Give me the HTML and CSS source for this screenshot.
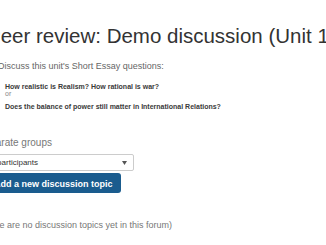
FILE: index.html
```html
<!DOCTYPE html>
<html lang="en">
<head>
<meta charset="utf-8">
<title>Peer review: Demo discussion</title>
<link rel="stylesheet" href="styles.css">
</head>
<body>
<div class="page">
  <h2 class="title">Peer review: Demo discussion (Unit 1)</h2>
  <div class="intro">
    <p class="lead">Discuss this unit's Short Essay questions:</p>
    <p class="question">How realistic is Realism? How rational is war?</p>
    <p class="or">or</p>
    <p class="question q2">Does the balance of power still matter in International Relations?</p>
  </div>
  <div class="groups">
    <label class="groups-label">Separate groups</label>
    <div class="select">
      <span>All participants</span>
      <svg class="arrow" width="5" height="4" viewBox="0 0 5 4"><path d="M0 0H5L2.5 4Z" fill="#555"/></svg>
    </div>
  </div>
  <button class="btn">Add a new discussion topic</button>
  <p class="empty">(There are no discussion topics yet in this forum)</p>
</div>
</body>
</html>
```
FILE: styles.css
```css
html, body {
  margin: 0;
  padding: 0;
  overflow: hidden;
  background: #fff;
}
body {
  font-family: "Liberation Sans", Arial, sans-serif;
  width: 326px;
  height: 245px;
}
.page {
  margin-left: -22px;
  display: flex;
  flex-direction: column;
  align-items: flex-start;
}
.title {
  margin: 24px 0 0 9px;
  font-size: 20.5px;
  line-height: 24px;
  font-weight: normal;
  color: #333;
  white-space: nowrap;
}
.intro {
  padding-left: 20px;
}
.intro p {
  margin: 0;
}
.lead {
  margin-top: 12px !important;
  font-size: 9px;
  line-height: 12px;
  color: #666;
}
.question {
  padding-left: 7px;
  font-size: 7px;
  line-height: 8px;
  font-weight: bold;
  color: #3a3a3a;
  margin-top: 11px !important;
}
.q2 {
  margin-top: 5px !important;
}
.or {
  padding-left: 7px;
  font-size: 7px;
  line-height: 8px;
  color: #888;
  margin-top: -1px !important;
}
.groups {
  margin-top: 26px;
  display: flex;
  flex-direction: column;
}
.groups-label {
  font-size: 10px;
  line-height: 12px;
  color: #777;
}
.select {
  margin-top: 5px;
  box-sizing: border-box;
  width: 156px;
  height: 17px;
  border: 1px solid #ccc;
  border-radius: 2px;
  padding: 0 6px 0 7px;
  display: flex;
  align-items: center;
  justify-content: space-between;
  font-size: 8px;
  color: #333;
}
.btn {
  margin: 2px 0 0 8px;
  box-sizing: border-box;
  height: 20px;
  padding: 2px 8px 0;
  border: none;
  border-radius: 3px;
  background: #1a5c8e;
  color: #fff;
  font-family: "Liberation Sans", Arial, sans-serif;
  font-size: 9px;
  font-weight: bold;
  line-height: 18px;
}
.empty {
  margin: 26px 0 0 0;
  font-size: 9px;
  line-height: 12px;
  color: #777;
}
```
